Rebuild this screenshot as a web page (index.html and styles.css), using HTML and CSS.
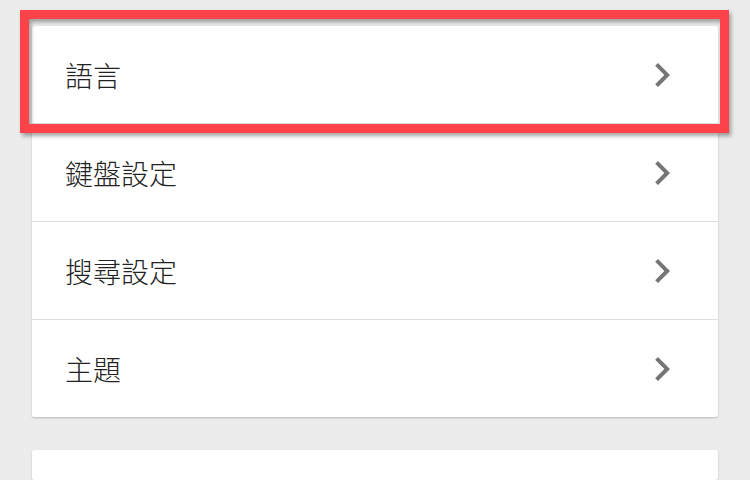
FILE: index.html
```html
<!DOCTYPE html>
<html lang="zh-Hant">
<head>
<meta charset="utf-8">
<link rel="stylesheet" href="styles.css">
</head>
<body>
<div class="page">
  <div class="card">
    <div class="row"><span class="label">語言</span><svg class="chev" viewBox="0 0 24 24"><path d="M10 6L8.59 7.41 13.17 12l-4.58 4.59L10 18l6-6z"/></svg></div>
    <div class="row"><span class="label">鍵盤設定</span><svg class="chev" viewBox="0 0 24 24"><path d="M10 6L8.59 7.41 13.17 12l-4.58 4.59L10 18l6-6z"/></svg></div>
    <div class="row"><span class="label">搜尋設定</span><svg class="chev" viewBox="0 0 24 24"><path d="M10 6L8.59 7.41 13.17 12l-4.58 4.59L10 18l6-6z"/></svg></div>
    <div class="row"><span class="label">主題</span><svg class="chev" viewBox="0 0 24 24"><path d="M10 6L8.59 7.41 13.17 12l-4.58 4.59L10 18l6-6z"/></svg></div>
  </div>
  <div class="card card-next"></div>
  <div class="highlight"></div>
</div>
</body>
</html>
```
FILE: styles.css
```css
html, body {
  margin: 0;
  padding: 0;
  background: #ececec;
  overflow: hidden;
}
.page {
  position: relative;
  width: 750px;
  height: 480px;
  padding: 26px 32px 0;
  box-sizing: border-box;
  overflow: hidden;
  font-family: "Noto Sans CJK TC", "Noto Sans", sans-serif;
}
.card {
  background: #fff;
  border-radius: 2px;
  box-shadow: 0 1px 2px rgba(0,0,0,0.22);
}
.card-next {
  margin-top: 33px;
  height: 30px;
}
.row {
  height: 97px;
  display: flex;
  align-items: center;
  justify-content: space-between;
  padding: 0 32px 0 32px;
  border-bottom: 1px solid #e0e0e0;
}
.row:last-child {
  border-bottom: none;
}
.label {
  font-size: 28px;
  font-weight: 300;
  color: #222;
  line-height: 1;
  margin-left: 1px;
}
.chev {
  width: 48px;
  height: 48px;
  fill: #757575;
}
.highlight {
  position: absolute;
  left: 20px;
  top: 10px;
  width: 709px;
  height: 123px;
  box-sizing: border-box;
  border: 9px solid #fc4349;
  box-shadow: 2px 3px 4px rgba(0,0,0,0.35), inset 2px 3px 4px rgba(0,0,0,0.35);
}
```
